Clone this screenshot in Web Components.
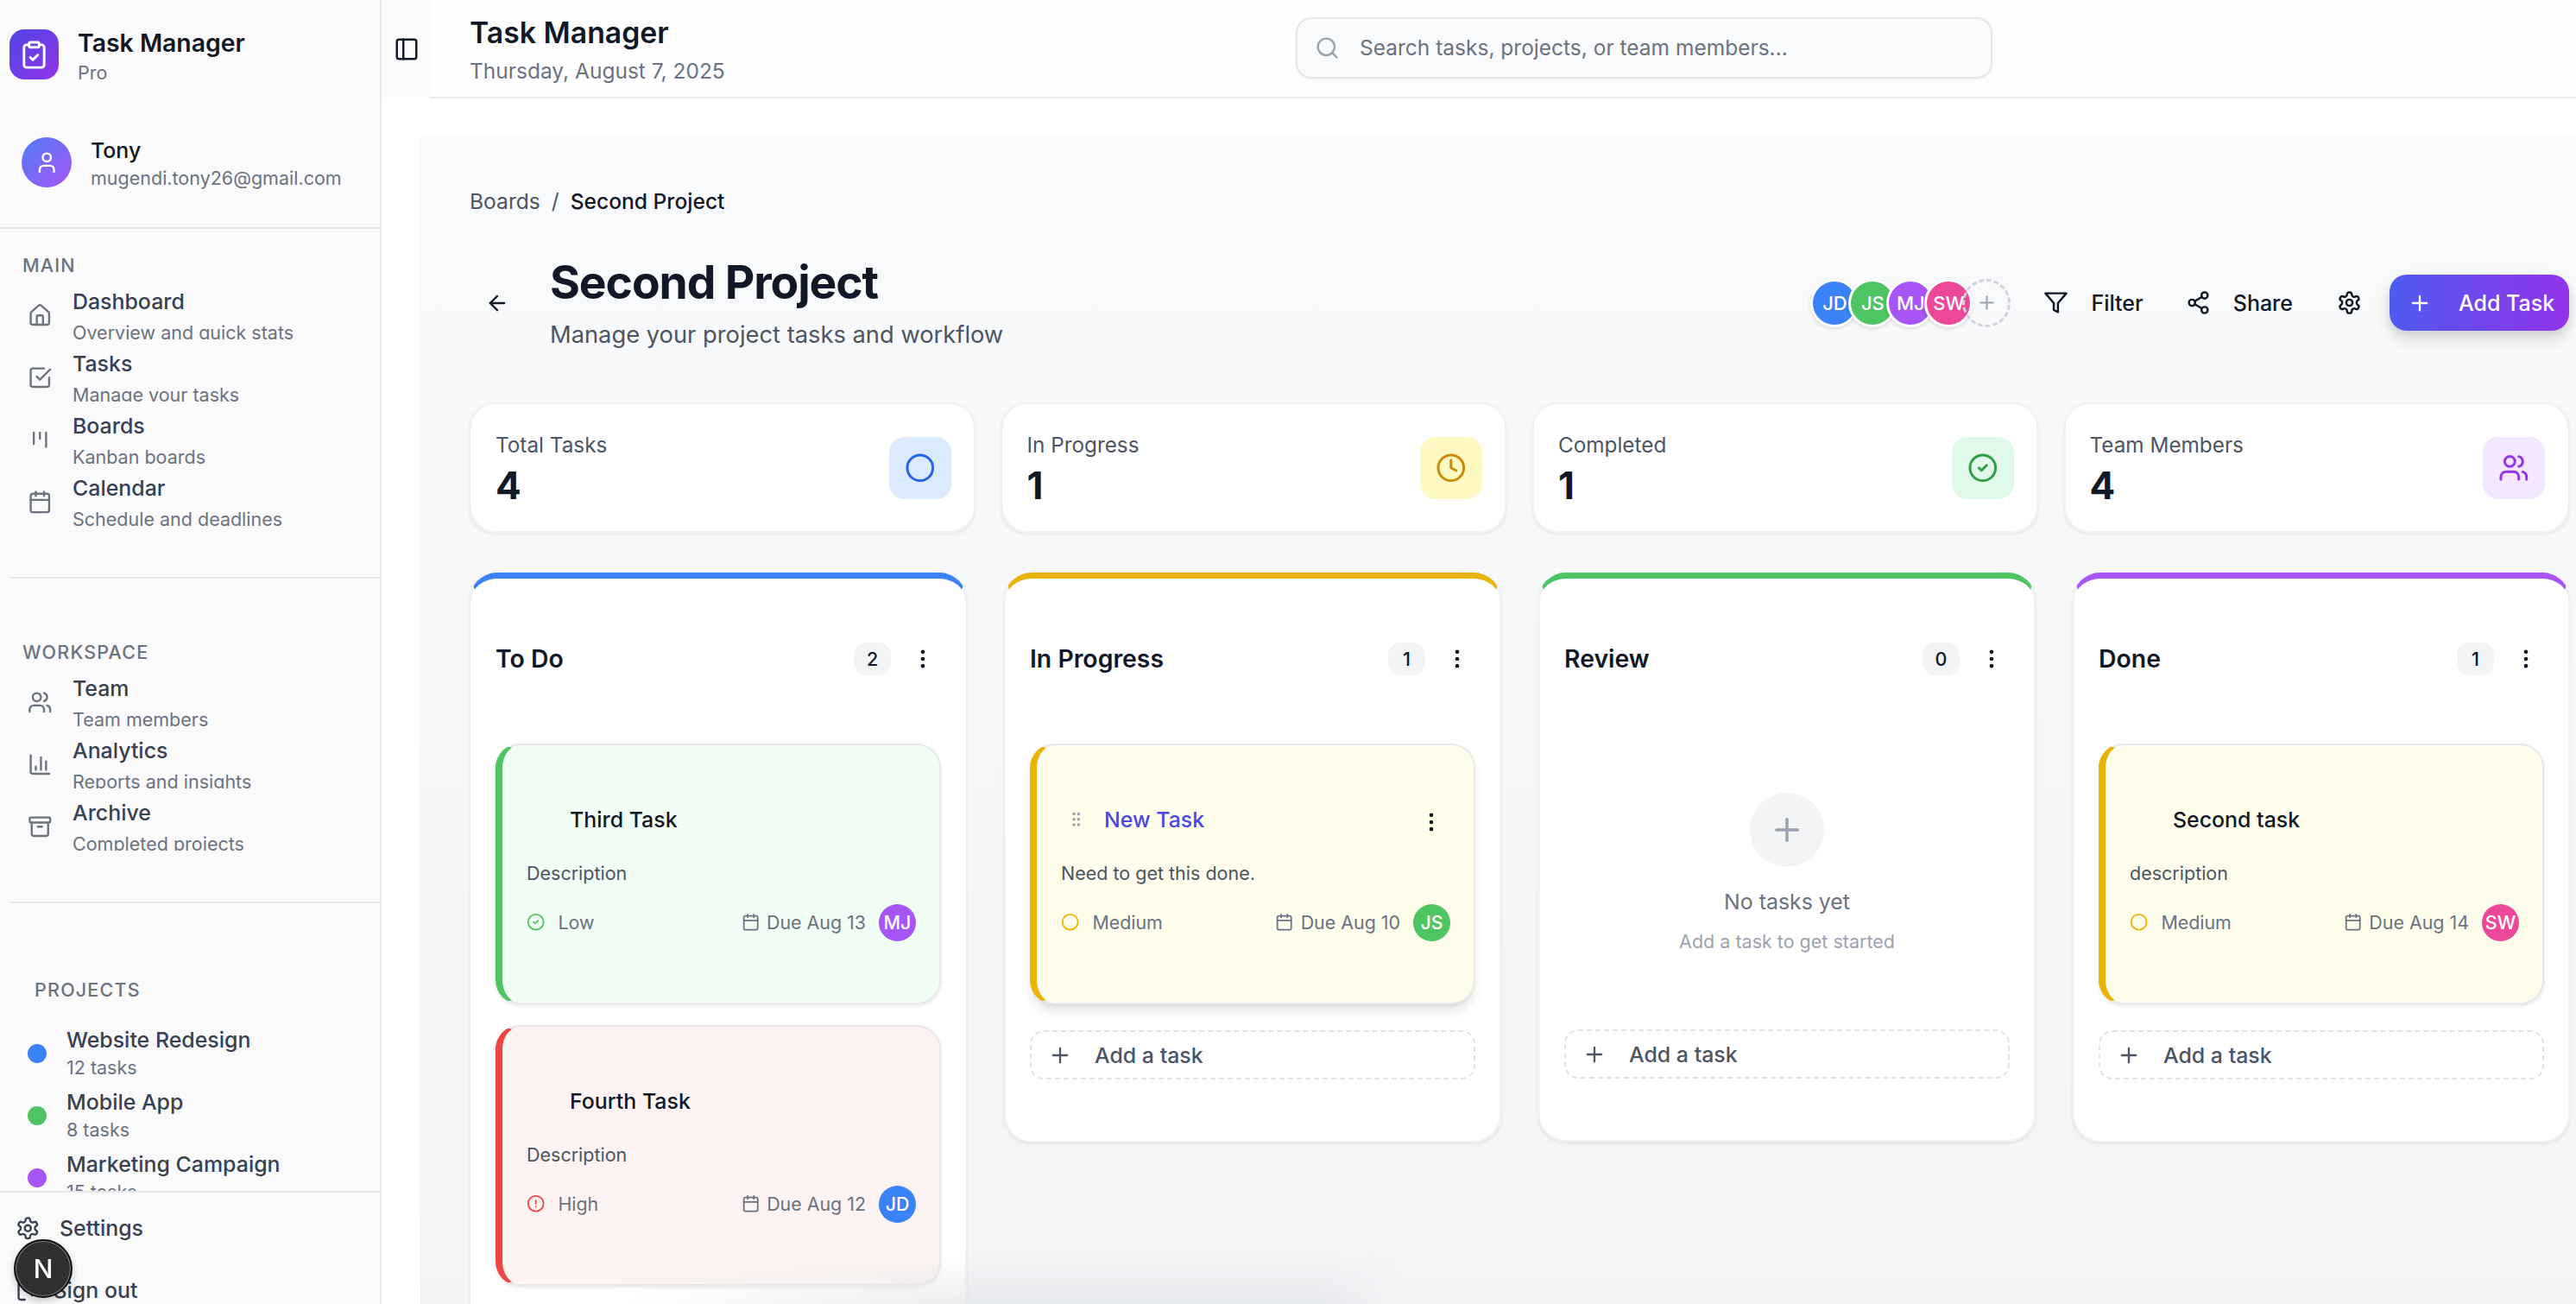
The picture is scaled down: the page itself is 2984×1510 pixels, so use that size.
<!DOCTYPE html>
<html lang="en">
<head>
<meta charset="utf-8">
<title>Task Manager</title>
<style>
    html, body { margin: 0; padding: 0; height: 100%; }
    body {
        width: 2984px;
        height: 1510px;
        overflow: hidden;
        font-family: Inter, "Liberation Sans", sans-serif;
        color: #111827;
        background: #ffffff;
    }
</style>
</head>
<body>
<tm-app>
    <tm-sidebar slot="sidebar">
        <tm-nav-group label="Main">
            <tm-nav-item icon="house" sub="Overview and quick stats">Dashboard</tm-nav-item>
            <tm-nav-item icon="squareCheck" sub="Manage your tasks">Tasks</tm-nav-item>
            <tm-nav-item icon="kanban" sub="Kanban boards">Boards</tm-nav-item>
            <tm-nav-item icon="calendar" sub="Schedule and deadlines">Calendar</tm-nav-item>
        </tm-nav-group>
        <tm-nav-group label="Workspace" divided>
            <tm-nav-item icon="users" sub="Team members">Team</tm-nav-item>
            <tm-nav-item icon="chart" sub="Reports and insights">Analytics</tm-nav-item>
            <tm-nav-item icon="archive" sub="Completed projects">Archive</tm-nav-item>
        </tm-nav-group>
        <tm-project-list label="Projects">
            <tm-project-item color="#3b82f6" sub="12 tasks">Website Redesign</tm-project-item>
            <tm-project-item color="#4ec462" sub="8 tasks">Mobile App</tm-project-item>
            <tm-project-item color="#a855f7" sub="15 tasks">Marketing Campaign</tm-project-item>
        </tm-project-list>
    </tm-sidebar>
    <tm-header slot="header"></tm-header>
    <tm-board slot="main">
        <tm-stat-card slot="stats" label="Total Tasks" value="4" icon="circle" bg="#dbeafe" color="#2563eb"></tm-stat-card>
        <tm-stat-card slot="stats" label="In Progress" value="1" icon="clock" bg="#fef9c3" color="#ca8a04"></tm-stat-card>
        <tm-stat-card slot="stats" label="Completed" value="1" icon="circleCheck" bg="#e1f9e8" color="#2f9e44"></tm-stat-card>
        <tm-stat-card slot="stats" label="Team Members" value="4" icon="users" bg="#f3e8ff" color="#9333ea"></tm-stat-card>

        <tm-column slot="columns" name="To Do" count="2" color="#3b82f6">
            <tm-task-card name="Third Task" desc="Description" priority="Low" due="Due Aug 13" who="MJ" tone="green"></tm-task-card>
            <tm-task-card name="Fourth Task" desc="Description" priority="High" due="Due Aug 12" who="JD" tone="red"></tm-task-card>
        </tm-column>
        <tm-column slot="columns" name="In Progress" count="1" color="#eab308">
            <tm-task-card name="New Task" desc="Need to get this done." priority="Medium" due="Due Aug 10" who="JS" tone="yellow" hover></tm-task-card>
        </tm-column>
        <tm-column slot="columns" name="Review" count="0" color="#4ec462">
            <tm-empty-state></tm-empty-state>
        </tm-column>
        <tm-column slot="columns" name="Done" count="1" color="#a855f7">
            <tm-task-card name="Second task" desc="description" priority="Medium" due="Due Aug 14" who="SW" tone="yellow"></tm-task-card>
        </tm-column>
    </tm-board>
</tm-app>
<tm-next-badge></tm-next-badge>

<script>
// lucide style outlines, 24 box
const ICONS = {
    clipboardCheck: '<rect x="8" y="2" width="8" height="4" rx="1"/><path d="M16 4h2a2 2 0 0 1 2 2v14a2 2 0 0 1-2 2H6a2 2 0 0 1-2-2V6a2 2 0 0 1 2-2h2"/><path d="m9 14 2 2 4-4"/>',
    user: '<path d="M19 21v-2a4 4 0 0 0-4-4H9a4 4 0 0 0-4 4v2"/><circle cx="12" cy="7" r="4"/>',
    house: '<path d="M15 21v-8a1 1 0 0 0-1-1h-4a1 1 0 0 0-1 1v8"/><path d="M3 10a2 2 0 0 1 .709-1.528l7-5.999a2 2 0 0 1 2.582 0l7 5.999A2 2 0 0 1 21 10v9a2 2 0 0 1-2 2H5a2 2 0 0 1-2-2z"/>',
    squareCheck: '<path d="m9 11 3 3L22 4"/><path d="M21 12v7a2 2 0 0 1-2 2H5a2 2 0 0 1-2-2V5a2 2 0 0 1 2-2h11"/>',
    kanban: '<path d="M6 5v11"/><path d="M12 5v6"/><path d="M18 5v14"/>',
    calendar: '<path d="M8 2v4"/><path d="M16 2v4"/><rect x="3" y="4" width="18" height="18" rx="2"/><path d="M3 10h18"/>',
    users: '<path d="M16 21v-2a4 4 0 0 0-4-4H6a4 4 0 0 0-4 4v2"/><circle cx="9" cy="7" r="4"/><path d="M22 21v-2a4 4 0 0 0-3-3.87"/><path d="M16 3.13a4 4 0 0 1 0 7.75"/>',
    chart: '<path d="M3 3v16a2 2 0 0 0 2 2h16"/><path d="M18 17V9"/><path d="M13 17V5"/><path d="M8 17v-3"/>',
    archive: '<rect x="2" y="3" width="20" height="5" rx="1"/><path d="M4 8v11a2 2 0 0 0 2 2h12a2 2 0 0 0 2-2V8"/><path d="M10 12h4"/>',
    settings: '<path d="M12.22 2h-.44a2 2 0 0 0-2 2v.18a2 2 0 0 1-1 1.73l-.43.25a2 2 0 0 1-2 0l-.15-.08a2 2 0 0 0-2.73.73l-.22.38a2 2 0 0 0 .73 2.73l.15.1a2 2 0 0 1 1 1.72v.51a2 2 0 0 1-1 1.74l-.15.09a2 2 0 0 0-.73 2.73l.22.38a2 2 0 0 0 2.73.73l.15-.08a2 2 0 0 1 2 0l.43.25a2 2 0 0 1 1 1.73V20a2 2 0 0 0 2 2h.44a2 2 0 0 0 2-2v-.18a2 2 0 0 1 1-1.73l.43-.25a2 2 0 0 1 2 0l.15.08a2 2 0 0 0 2.73-.73l.22-.39a2 2 0 0 0-.73-2.73l-.15-.08a2 2 0 0 1-1-1.74v-.5a2 2 0 0 1 1-1.74l.15-.09a2 2 0 0 0 .73-2.73l-.22-.38a2 2 0 0 0-2.73-.73l-.15.08a2 2 0 0 1-2 0l-.43-.25a2 2 0 0 1-1-1.73V4a2 2 0 0 0-2-2z"/><circle cx="12" cy="12" r="3"/>',
    logOut: '<path d="M9 21H5a2 2 0 0 1-2-2V5a2 2 0 0 1 2-2h4"/><path d="m16 17 5-5-5-5"/><path d="M21 12H9"/>',
    panelLeft: '<rect x="3" y="3" width="18" height="18" rx="2"/><path d="M9 3v18"/>',
    search: '<circle cx="11" cy="11" r="8"/><path d="m21 21-4.3-4.3"/>',
    arrowLeft: '<path d="m12 19-7-7 7-7"/><path d="M19 12H5"/>',
    filter: '<path d="M22 3H2l8 9.46V19l4 2v-8.54z"/>',
    share: '<circle cx="18" cy="5" r="3"/><circle cx="6" cy="12" r="3"/><circle cx="18" cy="19" r="3"/><path d="m8.59 13.51 6.83 3.98"/><path d="m15.41 6.51-6.82 3.98"/>',
    plus: '<path d="M5 12h14"/><path d="M12 5v14"/>',
    circle: '<circle cx="12" cy="12" r="10"/>',
    clock: '<circle cx="12" cy="12" r="10"/><path d="M12 6v6l4 2"/>',
    circleCheck: '<circle cx="12" cy="12" r="10"/><path d="m9 12 2 2 4-4"/>',
    circleAlert: '<circle cx="12" cy="12" r="10"/><path d="M12 8v4"/><path d="M12 16h.01"/>',
    more: '<circle cx="12" cy="5" r="1"/><circle cx="12" cy="12" r="1"/><circle cx="12" cy="19" r="1"/>',
    grip: '<circle cx="9" cy="5" r="1"/><circle cx="9" cy="12" r="1"/><circle cx="9" cy="19" r="1"/><circle cx="15" cy="5" r="1"/><circle cx="15" cy="12" r="1"/><circle cx="15" cy="19" r="1"/>'
};

function svgIcon(name, size, color, stroke) {
    return `<svg width="${size}" height="${size}" viewBox="0 0 24 24" fill="none" stroke="${color || "currentColor"}" stroke-width="${stroke || 2}" stroke-linecap="round" stroke-linejoin="round" style="flex:none;display:block">${ICONS[name]}</svg>`;
}

const AVATAR_COLORS = { JD: "#3b82f6", JS: "#4ec462", MJ: "#a855f7", SW: "#ec4899" };

class TmApp extends HTMLElement {
    constructor() {
        super();
        this.attachShadow({ mode: "open" });
        this.shadowRoot.innerHTML = `
            <style>
                :host { display: flex; width: 2984px; height: 1510px; overflow: hidden; }
                .right { flex: 1; min-width: 0; display: flex; flex-direction: column; }
                .scroll { flex: 1; min-height: 0; overflow: hidden; padding: 43px 0 0 44px; background: #ffffff; }
            </style>
            <slot name="sidebar"></slot>
            <div class="right">
                <slot name="header"></slot>
                <div class="scroll"><slot name="main"></slot></div>
            </div>`;
    }
}

class TmSidebar extends HTMLElement {
    constructor() {
        super();
        this.attachShadow({ mode: "open" });
        this.shadowRoot.innerHTML = `
            <style>
                :host {
                    display: flex;
                    flex-direction: column;
                    flex: none;
                    width: 442px;
                    height: 1510px;
                    box-sizing: border-box;
                    border-right: 2px solid #e8e8ea;
                    background: #fafafa;
                }
                .brand { display: flex; align-items: center; gap: 22px; height: 126px; padding-left: 11px; box-sizing: border-box; }
                .logo {
                    width: 57px; height: 58px; border-radius: 17px; flex: none;
                    display: flex; align-items: center; justify-content: center;
                    background: linear-gradient(135deg, #4f46e5, #9333ea);
                }
                .names { margin-top: 3px; }
                .brand b { display: block; font-size: 28.4px; line-height: 38px; font-weight: 600; color: #111827; }
                .brand span { display: block; font-size: 21.5px; line-height: 30px; color: #6b7280; }
                .user { display: flex; align-items: center; gap: 22px; height: 139px; padding: 0 0 13px 25px; box-sizing: border-box; border-bottom: 2px solid #e8e8ea; }
                .avatar {
                    width: 58px; height: 58px; border-radius: 50%;
                    display: flex; align-items: center; justify-content: center;
                    background: linear-gradient(135deg, #4f7cf7, #a855f7);
                }
                .user b { display: block; font-size: 24.9px; line-height: 36px; font-weight: 500; color: #111827; }
                .user span { display: block; font-size: 21.5px; line-height: 28px; color: #6b7280; }
                .nav { flex: 1; min-height: 0; overflow: hidden; }
                .foot { flex: none; height: 131px; box-sizing: border-box; border-top: 2px solid #e8e8ea; padding-top: 21px; overflow: hidden; }
                .foot div { display: flex; align-items: center; height: 40px; margin-bottom: 32px; padding-left: 18px; gap: 22.5px; font-size: 24.9px; font-weight: 500; color: #374151; }
                .foot div.out { gap: 15px; }
            </style>
            <div class="brand">
                <div class="logo">${svgIcon("clipboardCheck", 35, "#fff", 2)}</div>
                <div class="names"><b>Task Manager</b><span>Pro</span></div>
            </div>
            <div class="user">
                <div class="avatar">${svgIcon("user", 28.5, "#fff", 2)}</div>
                <div><b>Tony</b><span>mugendi.tony26@gmail.com</span></div>
            </div>
            <div class="nav"><slot></slot></div>
            <div class="foot">
                <div>${svgIcon("settings", 28.5, "#374151", 2)}Settings</div>
                <div class="out">${svgIcon("logOut", 28.5, "#374151", 2)}Sign out</div>
            </div>`;
    }
}

class TmNavGroup extends HTMLElement {
    constructor() {
        super();
        this.attachShadow({ mode: "open" });
    }
    connectedCallback() {
        const divided = this.hasAttribute("divided");
        this.shadowRoot.innerHTML = `
            <style>
                :host { display: block; box-sizing: border-box; }
                .wrap { margin-left: 11px; padding: ${divided ? "70px" : "27px"} 0 59px 15px; border-bottom: 2px solid #e8e8ea; }
                .label { font-size: 21.5px; line-height: 30px; font-weight: 500; letter-spacing: 1.2px; text-transform: uppercase; color: #6b7280; margin-bottom: 7px; }
                .list { display: flex; flex-direction: column; gap: 8px; }
            </style>
            <div class="wrap">
                <div class="label">${this.getAttribute("label")}</div>
                <div class="list"><slot></slot></div>
            </div>`;
    }
}

class TmNavItem extends HTMLElement {
    constructor() {
        super();
        this.attachShadow({ mode: "open" });
    }
    connectedCallback() {
        this.shadowRoot.innerHTML = `
            <style>
                :host { display: flex; height: 64px; overflow: hidden; align-items: flex-start; }
                .icon { width: 58px; flex: none; padding: 22px 0 0 6px; box-sizing: border-box; color: #6b7280; }
                .title { font-size: 24.9px; line-height: 40px; font-weight: 500; color: #374151; }
                .sub { font-size: 21.5px; line-height: 32px; color: #6b7280; white-space: nowrap; }
            </style>
            <div class="icon">${svgIcon(this.getAttribute("icon"), 28.5, "#6b7280", 2)}</div>
            <div>
                <div class="title"><slot></slot></div>
                <div class="sub">${this.getAttribute("sub")}</div>
            </div>`;
    }
}

class TmProjectList extends HTMLElement {
    constructor() {
        super();
        this.attachShadow({ mode: "open" });
    }
    connectedCallback() {
        this.shadowRoot.innerHTML = `
            <style>
                :host { display: block; padding: 85px 0 0 32px; }
                .label { font-size: 21.5px; line-height: 30px; font-weight: 500; letter-spacing: 1.2px; text-transform: uppercase; color: #6b7280; margin: 0 0 25px 8px; }
                .list { display: flex; flex-direction: column; gap: 8px; }
            </style>
            <div class="label">${this.getAttribute("label")}</div>
            <div class="list"><slot></slot></div>`;
    }
}

class TmProjectItem extends HTMLElement {
    constructor() {
        super();
        this.attachShadow({ mode: "open" });
    }
    connectedCallback() {
        this.shadowRoot.innerHTML = `
            <style>
                :host { display: flex; align-items: center; gap: 23px; height: 64px; }
                .dot { width: 22px; height: 22px; border-radius: 50%; flex: none; background: ${this.getAttribute("color")}; margin-top: 4px; }
                .title { font-size: 24.9px; line-height: 36px; font-weight: 500; color: #374151; }
                .sub { font-size: 21.5px; line-height: 28px; color: #6b7280; }
            </style>
            <span class="dot"></span>
            <div>
                <div class="title"><slot></slot></div>
                <div class="sub">${this.getAttribute("sub")}</div>
            </div>`;
    }
}

class TmHeader extends HTMLElement {
    constructor() {
        super();
        this.attachShadow({ mode: "open" });
        this.shadowRoot.innerHTML = `
            <style>
                :host { display: flex; flex: none; height: 114px; box-sizing: border-box; position: relative; }
                .toggle { width: 57px; flex: none; height: 113px; background: #fafafa; display: flex; align-items: center; padding-left: 14px; box-sizing: border-box; }
                .bar { flex: 1; display: flex; align-items: center; border-bottom: 2px solid #e8e8ea; background: #fefefe; padding-left: 45px; }
                .titles { width: 957px; flex: none; padding-top: 4px; }
                h2 { margin: 0; font-size: 33.8px; line-height: 44px; font-weight: 600; color: #111827; }
                p { margin: 0; font-size: 24.5px; line-height: 36px; color: #6b7280; margin-top: 4px; }
                .search {
                    width: 807px; height: 71px; box-sizing: border-box; margin-top: -2px;
                    display: flex; align-items: center; gap: 23px; padding-left: 20px;
                    border: 2px solid #e5e7eb; border-radius: 18px; background: #f9fafb;
                    box-shadow: 0 1px 2px rgba(0,0,0,.05);
                    font-size: 24.5px; color: #6b7280;
                }
            </style>
            <div class="toggle">${svgIcon("panelLeft", 30, "#111827", 2)}</div>
            <div class="bar">
                <div class="titles"><h2>Task Manager</h2><p>Thursday, August 7, 2025</p></div>
                <div class="search">${svgIcon("search", 29, "#9ca3af", 2)}<span>Search tasks, projects, or team members...</span></div>
            </div>`;
    }
}

class TmBoard extends HTMLElement {
    constructor() {
        super();
        this.attachShadow({ mode: "open" });
        this.shadowRoot.innerHTML = `
            <style>
                :host { display: block; box-sizing: border-box; height: 1353px; position: relative; padding: 56px 8px 0 58px; background: linear-gradient(180deg, #f9fafc, #f3f4f6); overflow: hidden; }
                .crumbs { display: flex; align-items: center; font-size: 24.6px; line-height: 40px; color: #4b5563; gap: 13px; }
                .crumbs b { font-weight: 500; color: #111827; }
                .head { display: flex; align-items: center; justify-content: space-between; margin: 38px 0 56px; }
                .left { display: flex; align-items: center; }
                .back { width: 64px; flex: none; display: flex; justify-content: center; margin-right: 29px; }
                h1 { margin: 0; font-size: 53.4px; line-height: 72px; font-weight: 700; color: #111827; letter-spacing: -1.1px; }
                .sub { margin: 3px 0 0; font-size: 27.3px; line-height: 44px; color: #4b5563; }
                .actions { display: flex; align-items: center; }
                .stack { display: flex; margin-right: 16px; }
                .stack span {
                    width: 56px; height: 56px; margin-right: -12px; box-sizing: border-box; flex: none;
                    border: 3px solid #fff; border-radius: 50%; overflow: hidden;
                    display: flex; align-items: center; justify-content: center;
                    font-size: 22px; color: #fff; font-weight: 500; white-space: nowrap;
                    box-shadow: 0 2px 4px rgba(0,0,0,.12);
                }
                .stack span.more { border: 3px dashed #d1d5db; margin-right: 0; background: transparent; box-shadow: none; }
                .btn { display: flex; align-items: center; height: 64px; padding: 0 22px; gap: 26px; font-size: 25px; font-weight: 500; color: #111827; }
                .btn + .btn { margin-left: 5px; }
                .btn.gear { padding: 0 12px; margin: 0 20px 0 17px; }
                .add {
                    width: 208px; height: 65px; box-sizing: border-box; padding: 0 0 0 21px; gap: 31px;
                    display: flex; align-items: center;
                    border-radius: 20px; color: #fff; font-size: 25px; font-weight: 500; white-space: nowrap;
                    background: linear-gradient(90deg, #4f5bf0, #9333ea);
                    box-shadow: 0 10px 20px rgba(0,0,0,.12), 0 4px 8px rgba(0,0,0,.08);
                }
                .stats { display: grid; grid-template-columns: repeat(4, 1fr); gap: 30px; margin-bottom: 46px; }
                .cols { display: grid; grid-template-columns: repeat(4, 576px); column-gap: 43px; align-items: start; }
                .fade {
                    position: absolute; left: 0; bottom: 0; width: 1134px; height: 56px; pointer-events: none;
                    background: linear-gradient(180deg, rgba(226,228,231,0), rgba(226,228,231,.7));
                    -webkit-mask-image: linear-gradient(90deg, transparent 20%, #000 55%, #000 92%, transparent);
                }
            </style>
            <div class="crumbs"><span>Boards</span><span>/</span><b>Second Project</b></div>
            <div class="head">
                <div class="left">
                    <div class="back">${svgIcon("arrowLeft", 28, "#111827", 2)}</div>
                    <div><h1>Second Project</h1><p class="sub">Manage your project tasks and workflow</p></div>
                </div>
                <div class="actions">
                    <div class="stack">
                        ${["JD", "JS", "MJ", "SW"].map(n => `<span style="background:${AVATAR_COLORS[n]}">${n}</span>`).join("")}
                        <span class="more">${svgIcon("plus", 25, "#9ca3af", 2)}</span>
                    </div>
                    <div class="btn">${svgIcon("filter", 29, "#111827", 2)}Filter</div>
                    <div class="btn">${svgIcon("share", 29, "#111827", 2)}Share</div>
                    <div class="btn gear">${svgIcon("settings", 29, "#111827", 2)}</div>
                    <div class="add">${svgIcon("plus", 28, "#fff", 2)}Add Task</div>
                </div>
            </div>
            <div class="stats"><slot name="stats"></slot></div>
            <div class="cols"><slot name="columns"></slot></div>
            <div class="fade"></div>`;
    }
}

class TmStatCard extends HTMLElement {
    constructor() {
        super();
        this.attachShadow({ mode: "open" });
    }
    connectedCallback() {
        this.shadowRoot.innerHTML = `
            <style>
                :host {
                    display: flex; align-items: center; justify-content: space-between;
                    height: 151px; box-sizing: border-box; padding: 0 26px 0 28px;
                    background: #fff; border: 2px solid #f1f2f4; border-radius: 30px;
                    box-shadow: 0 2px 4px rgba(0,0,0,.08);
                }
                .label { font-size: 24.3px; line-height: 36px; color: #4b5563; }
                .value { font-size: 44px; line-height: 50px; font-weight: 700; color: #111827; margin-top: 4px; }
                .box { width: 72px; height: 72px; border-radius: 18px; display: flex; align-items: center; justify-content: center; background: ${this.getAttribute("bg")}; }
            </style>
            <div>
                <div class="label">${this.getAttribute("label")}</div>
                <div class="value">${this.getAttribute("value")}</div>
            </div>
            <div class="box">${svgIcon(this.getAttribute("icon"), 35.6, this.getAttribute("color"), 2)}</div>`;
    }
}

class TmColumn extends HTMLElement {
    constructor() {
        super();
        this.attachShadow({ mode: "open" });
    }
    connectedCallback() {
        this.shadowRoot.innerHTML = `
            <style>
                :host {
                    display: block; box-sizing: border-box;
                    background: #fff; border: 2px solid #f1f2f4; border-top: 7px solid ${this.getAttribute("color")};
                    border-radius: 32px; padding: 0 28px 71px;
                    box-shadow: 0 2px 4px rgba(0,0,0,.08);
                }
                .head { display: flex; align-items: center; height: 185px; margin-bottom: 6px; }
                h3 { flex: 1; margin: 0; font-size: 28.4px; font-weight: 600; color: #111827; }
                .count { min-width: 43px; height: 38px; box-sizing: border-box; padding: 0 13px; display: flex; align-items: center; justify-content: center; background: #f3f4f6; border-radius: 14px; font-size: 21.5px; font-weight: 500; color: #111827; margin-right: 23px; }
                .dots { margin-right: -21px; padding-right: 28px; }
                .list { display: flex; flex-direction: column; gap: 24px; }
                .add {
                    display: flex; align-items: center; gap: 26px; height: 57px; box-sizing: border-box; margin-top: 30px; padding-left: 19px;
                    border: 2px dashed #e1e3e7; border-radius: 16px;
                    font-size: 24.9px; font-weight: 500; color: #4b5563;
                }
            </style>
            <div class="head">
                <h3>${this.getAttribute("name")}</h3>
                <span class="count">${this.getAttribute("count")}</span>
                <span class="dots">${svgIcon("more", 28, "#111827", 2)}</span>
            </div>
            <div class="list"><slot></slot></div>
            <div class="add">${svgIcon("plus", 28, "#4b5563", 2)}Add a task</div>`;
    }
}

const TONES = {
    green: { bg: "#f0fdf4", edge: "#4ec462" },
    red: { bg: "#fdf3f2", edge: "#ef4444" },
    yellow: { bg: "#fefdeb", edge: "#eab308" }
};
const PRIORITY = {
    Low: { icon: "circleCheck", color: "#4ec462" },
    Medium: { icon: "circle", color: "#eab308" },
    High: { icon: "circleAlert", color: "#ef4444" }
};

class TmTaskCard extends HTMLElement {
    constructor() {
        super();
        this.attachShadow({ mode: "open" });
    }
    connectedCallback() {
        const tone = TONES[this.getAttribute("tone")];
        const prio = PRIORITY[this.getAttribute("priority")];
        const who = this.getAttribute("who");
        const hover = this.hasAttribute("hover");
        this.shadowRoot.innerHTML = `
            <style>
                :host {
                    display: block; height: 302px; box-sizing: border-box; padding: 66px 27px 0 28px;
                    background: ${tone.bg}; border: 2px solid #e8e9ec; border-left: 8px solid ${tone.edge};
                    border-radius: 28px;
                    box-shadow: ${hover ? "0 10px 15px -3px rgba(0,0,0,.12), 0 4px 6px -4px rgba(0,0,0,.1)" : "0 2px 4px rgba(0,0,0,.1)"};
                }
                .top { display: flex; align-items: center; height: 40px; }
                .grip { width: 50px; flex: none; padding-left: 7px; box-sizing: border-box; visibility: ${hover ? "visible" : "hidden"}; }
                .name { flex: 1; font-size: 24.9px; font-weight: 500; color: ${hover ? "#4f46e5" : "#111827"}; }
                .opts { margin: 6px 8px 0 0; visibility: ${hover ? "visible" : "hidden"}; }
                .desc { margin: 26px 0 0; font-size: 21.5px; line-height: 32px; color: #4b5563; }
                .meta { display: flex; align-items: center; height: 44px; margin-top: 19px; font-size: 21.4px; color: #6b7280; }
                .prio { flex: 1; display: flex; align-items: center; gap: 15px; }
                .due { display: flex; align-items: center; gap: 8px; margin-right: 15px; }
                .who { width: 43px; height: 43px; border-radius: 50%; display: flex; align-items: center; justify-content: center; color: #fff; font-weight: 500; background: ${AVATAR_COLORS[who]}; }
            </style>
            <div class="top">
                <span class="grip">${svgIcon("grip", 21.4, "#9ca3af", 2)}</span>
                <span class="name">${this.getAttribute("name")}</span>
                <span class="opts">${svgIcon("more", 28, "#111827", 2)}</span>
            </div>
            <p class="desc">${this.getAttribute("desc")}</p>
            <div class="meta">
                <span class="prio">${svgIcon(prio.icon, 21.4, prio.color, 2)}${this.getAttribute("priority")}</span>
                <span class="due">${svgIcon("calendar", 21.4, "#6b7280", 2)}${this.getAttribute("due")}</span>
                <span class="who">${who}</span>
            </div>`;
    }
}

class TmEmptyState extends HTMLElement {
    constructor() {
        super();
        this.attachShadow({ mode: "open" });
        this.shadowRoot.innerHTML = `
            <style>
                :host { display: flex; flex-direction: column; align-items: center; height: 301px; padding-top: 57px; box-sizing: border-box; }
                .ring { width: 86px; height: 86px; border-radius: 50%; background: #f3f4f6; display: flex; align-items: center; justify-content: center; }
                .a { margin-top: 20px; font-size: 24.9px; line-height: 40px; color: #6b7280; }
                .b { margin-top: 10px; font-size: 21.5px; line-height: 32px; color: #9ca3af; }
            </style>
            <div class="ring">${svgIcon("plus", 42, "#9ca3af", 2)}</div>
            <div class="a">No tasks yet</div>
            <div class="b">Add a task to get started</div>`;
    }
}

// dev indicator that sits over the sidebar footer
class TmNextBadge extends HTMLElement {
    constructor() {
        super();
        this.attachShadow({ mode: "open" });
        this.shadowRoot.innerHTML = `
            <style>
                :host {
                    position: fixed; left: 16px; top: 1435px; width: 68px; height: 68px; box-sizing: border-box;
                    border-radius: 50%; background: #2f2f2f; border: 2px solid #111;
                    box-shadow: 0 0 0 1px rgba(255,255,255,.4) inset, 0 4px 10px rgba(0,0,0,.2);
                    display: flex; align-items: center; justify-content: center;
                    font-size: 30px; font-weight: 500; color: #fff;
                }
            </style>
            N`;
    }
}

customElements.define("tm-app", TmApp);
customElements.define("tm-sidebar", TmSidebar);
customElements.define("tm-nav-group", TmNavGroup);
customElements.define("tm-nav-item", TmNavItem);
customElements.define("tm-project-list", TmProjectList);
customElements.define("tm-project-item", TmProjectItem);
customElements.define("tm-header", TmHeader);
customElements.define("tm-board", TmBoard);
customElements.define("tm-stat-card", TmStatCard);
customElements.define("tm-column", TmColumn);
customElements.define("tm-task-card", TmTaskCard);
customElements.define("tm-empty-state", TmEmptyState);
customElements.define("tm-next-badge", TmNextBadge);
</script>
</body>
</html>
